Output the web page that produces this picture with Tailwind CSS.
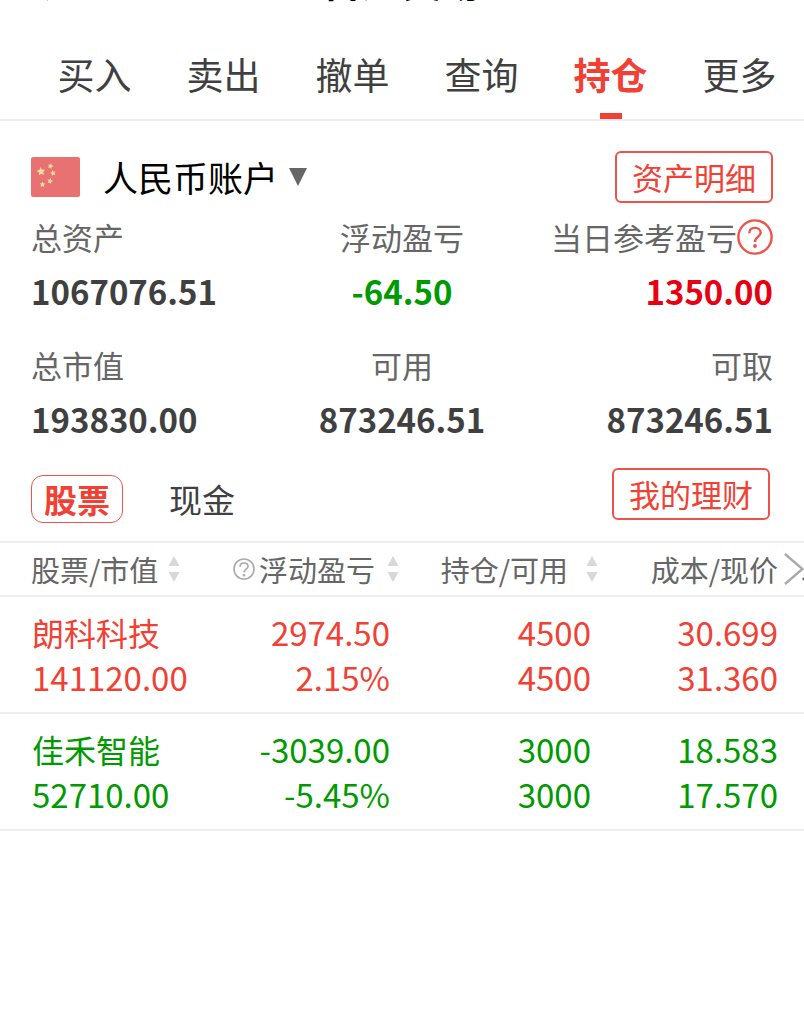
<!DOCTYPE html>
<html lang="zh-CN">

<head>
  <meta charset="UTF-8" />
  <meta name="viewport" content="width=device-width, initial-scale=1.0" />
  <title>普通交易 - 持仓</title>
  <script src="https://cdn.jsdelivr.net/npm/@tailwindcss/browser@4"></script>
</head>

<body class="bg-white text-[#404040] font-['Noto_Sans_CJK_SC',sans-serif] overflow-x-hidden">
  <!-- Title bar, scrolled almost out of view -->
  <header class="relative h-1 pb-1 flex items-end justify-center">
    <h1 class="text-[40px] leading-10 font-bold text-black">普通交易</h1>
    <a href="#" class="absolute left-[31px] bottom-0.5" aria-label="返回">
      <svg class="w-5 h-9" viewBox="0 0 20 36" fill="none" stroke="#888" stroke-width="2"><path d="M17 1 2 17 17 34" /></svg>
    </a>
  </header>

  <!-- Tabs -->
  <nav class="h-[117px] pl-[30px] pt-12 grid grid-cols-6 text-center text-[37px] leading-[44px] border-b-2 border-[#eeeeee]">
    <a href="#">买入</a>
    <a href="#">卖出</a>
    <a href="#">撤单</a>
    <a href="#">查询</a>
    <a href="#" class="flex flex-col items-center justify-between font-bold text-[#f04134]">持仓
      <span class="w-[22px] h-1.5 bg-[#f04134]"></span>
    </a>
    <a href="#">更多</a>
  </nav>

  <main>
    <!-- Account -->
    <section class="px-[31px] pt-[30px]">
      <div class="flex items-center justify-between">
        <label class="flex items-center">
          <svg class="w-[49px] h-10" viewBox="0 0 49 40" role="img" aria-label="账户币种">
            <defs>
              <path id="star" d="M0-5 1.400-1.900 4.800-1.500 2.300.8 2.900 4.200 0 2.500-2.900 4.200-2.300.8-4.800-1.500-1.400-1.900Z" />
            </defs>
            <rect width="49" height="40" rx="2" fill="#e87272" />
            <g fill="#fbdc9f">
              <use href="#star" transform="translate(10 14.5) rotate(-8) scale(.9)" />
              <use href="#star" transform="translate(19.5 9) rotate(20) scale(.6)" />
              <use href="#star" transform="translate(22 16) rotate(-15) scale(.6)" />
              <use href="#star" transform="translate(19 24) rotate(15) scale(.6)" />
              <use href="#star" transform="translate(11.5 27.5) scale(.6)" />
            </g>
          </svg>
          <select class="appearance-none ml-[23px] text-[35px] leading-[44px] text-black bg-transparent" aria-label="账户">
            <option>人民币账户</option>
          </select>
          <svg class="ml-2.5 w-[18px] h-[18px]" viewBox="0 0 18 18"><path d="M0 0H18L9 18Z" fill="#666" /></svg>
        </label>
        <button class="w-[158px] h-[52px] border-2 border-[#ee5248] rounded-md text-[31px] leading-9 text-[#f04134]">资产明细</button>
      </div>

      <dl class="mt-4 grid grid-cols-3 gap-y-[38px]">
        <div>
          <dt class="text-[31px] leading-9 text-[#666666]">总资产</dt>
          <dd class="mt-[18px] text-[33px] leading-9 font-bold">1067076.51</dd>
        </div>
        <div class="text-center">
          <dt class="text-[31px] leading-9 text-[#666666]">浮动盈亏</dt>
          <dd class="mt-[18px] text-[33px] leading-9 font-bold text-[#009a00]">-64.50</dd>
        </div>
        <div class="text-right">
          <dt class="flex justify-end text-[31px] leading-9 text-[#666666]">
            <span class="whitespace-nowrap">当日参考盈亏</span>
            <button aria-label="说明">
              <svg class="w-9 h-9" viewBox="0 0 36 36" fill="none" stroke="#ee5248" stroke-width="2.4">
                <circle cx="18" cy="18" r="16.6" />
                <path d="M12.300 14.300C12.300 10.800 14.700 8.900 18 8.900S23.700 11 23.700 13.800C23.700 17.700 18 17.800 18 23" />
                <circle cx="18" cy="27" r="1.900" fill="#ee5248" stroke="none" />
              </svg>
            </button>
          </dt>
          <dd class="mt-[18px] text-[33px] leading-9 font-bold text-[#e60012]">1350.00</dd>
        </div>
        <div>
          <dt class="text-[31px] leading-9 text-[#666666]">总市值</dt>
          <dd class="mt-[18px] text-[33px] leading-9 font-bold">193830.00</dd>
        </div>
        <div class="text-center">
          <dt class="text-[31px] leading-9 text-[#666666]">可用</dt>
          <dd class="mt-[18px] text-[33px] leading-9 font-bold">873246.51</dd>
        </div>
        <div class="text-right">
          <dt class="text-[31px] leading-9 text-[#666666]">可取</dt>
          <dd class="mt-[18px] text-[33px] leading-9 font-bold">873246.51</dd>
        </div>
      </dl>

      <div class="mt-[31px] pr-[3px] h-[55px] flex items-end">
        <button class="w-[92px] h-12 border border-[#ee5248] rounded-xl text-[33px] leading-9 font-bold text-[#f04134]">股票</button>
        <button class="ml-[46px] h-12 text-[33px] leading-9">现金</button>
        <button class="ml-auto self-start w-[158px] h-[52px] border-2 border-[#ee5248] rounded-md text-[31px] leading-9 text-[#f04134]">我的理财</button>
      </div>
    </section>

    <!-- Holdings -->
    <section class="relative mt-[18px]">
      <table class="w-full table-fixed border-collapse text-right">
        <thead class="text-[29px] leading-9 text-[#666666] border-y-2 border-[#eeeeee]">
          <tr class="h-[54px]">
            <th class="pl-[31px] font-normal">
              <button class="flex items-center gap-2.5 whitespace-nowrap">股票/市值
                <svg class="w-3 h-[26px]" viewBox="0 0 12 26" fill="#d8d8d8"><path d="M6 0 11.500 10H.5ZM6 26 .5 16H11.500Z" /></svg>
              </button>
            </th>
            <th class="pr-[3px] font-normal">
              <button class="ml-auto flex items-center whitespace-nowrap">
                <svg class="mr-1 w-[22px] h-[22px]" viewBox="0 0 22 22" fill="none" stroke="#aaa" stroke-width="1.600">
                  <circle cx="11" cy="11" r="10" />
                  <path d="M7 8.800C7 6.500 8.700 5 11 5S15 6.500 15 8.400C15 11 11 11.200 11 14.400" />
                  <circle cx="11" cy="17.200" r="1.300" fill="#aaa" stroke="none" />
                </svg>浮动盈亏
                <svg class="ml-3 w-3 h-[26px]" viewBox="0 0 12 26" fill="#d8d8d8"><path d="M6 0 11.500 10H.5ZM6 26 .5 16H11.500Z" /></svg>
              </button>
            </th>
            <th class="pr-[5px] font-normal">
              <button class="ml-auto flex items-center gap-[18px] whitespace-nowrap">持仓/可用
                <svg class="w-3 h-[26px]" viewBox="0 0 12 26" fill="#d8d8d8"><path d="M6 0 11.500 10H.5ZM6 26 .5 16H11.500Z" /></svg>
              </button>
            </th>
            <th class="pr-[26px] font-normal whitespace-nowrap">成本/现价</th>
          </tr>
        </thead>
        <tbody class="text-[33px] leading-[45px]">
          <tr class="h-[117px] border-b-2 border-[#eeeeee] text-[#f04134]">
            <td class="pl-8 text-left"><p class="text-[32px]">朗科科技</p><p>141120.00</p></td>
            <td class="pr-3"><p>2974.50</p><p>2.15%</p></td>
            <td class="pr-3"><p>4500</p><p>4500</p></td>
            <td class="pr-[26px]"><p>30.699</p><p>31.360</p></td>
          </tr>
          <tr class="h-[117px] border-b-2 border-[#eeeeee] text-[#009a00]">
            <td class="pl-8 text-left"><p class="text-[32px]">佳禾智能</p><p>52710.00</p></td>
            <td class="pr-3"><p>-3039.00</p><p>-5.45%</p></td>
            <td class="pr-3"><p>3000</p><p>3000</p></td>
            <td class="pr-[26px]"><p>18.583</p><p>17.570</p></td>
          </tr>
        </tbody>
      </table>
      <!-- More columns to the right -->
      <button class="absolute right-0 top-3 w-5 h-8" aria-label="更多列">
        <svg class="w-5 h-8" viewBox="0 0 20 32" fill="none" stroke="#aaa" stroke-width="2.500"><path d="M1 1 18.500 16 1 31" /><path d="M18.500 26H20" stroke="#666" /></svg>
      </button>
    </section>
  </main>
</body>

</html>
